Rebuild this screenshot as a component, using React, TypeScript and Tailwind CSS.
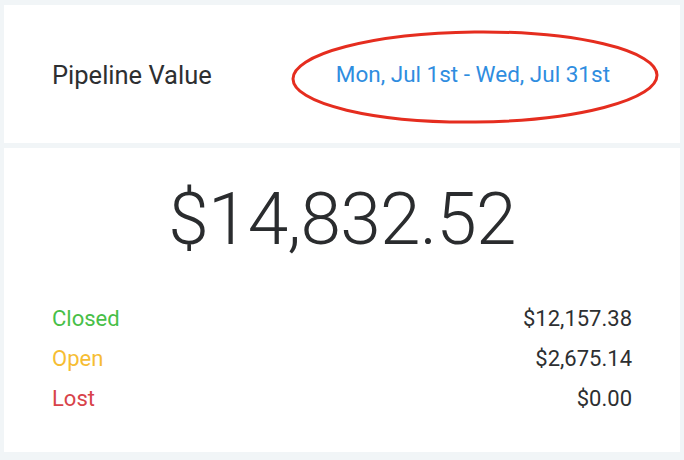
import React from "react";

export default function App() {
  return (
    <div className="w-[684px] h-[460px] bg-[#f1f5f7] px-[4px] pt-[5px] flex flex-col gap-[5px] font-['Roboto',_sans-serif]">
      <div className="relative h-[138px] bg-white flex items-center pl-[48px] pr-[70px]">
        <span className="text-[25.5px] text-[#2d2f31] mt-[2px]">Pipeline Value</span>
        <span className="ml-auto text-[22.5px] text-[#2f8ddf] mt-[1px]">Mon, Jul 1st - Wed, Jul 31st</span>
        <svg className="absolute left-[287px] top-[25px]" width="368" height="94" viewBox="0 0 368 94">
          <ellipse cx="184" cy="47" rx="182" ry="45" fill="none" stroke="#e52d1f" strokeWidth="3" transform="rotate(-0.6 184 47)" />
        </svg>
      </div>
      <div className="h-[304px] bg-white flex flex-col px-[48px]">
        <div className="h-[138px] flex items-center justify-center">
          <span className="text-[73px] font-light text-[#2a2c2e] leading-none tracking-[-0.8px] mt-[4px]">$14,832.52</span>
        </div>
        <div className="flex flex-col text-[22px] leading-[40px] mt-[13px]">
          <div className="flex justify-between">
            <span className="text-[#48bf48]">Closed</span>
            <span className="text-[#2d2f31]">$12,157.38</span>
          </div>
          <div className="flex justify-between">
            <span className="text-[#f6bd33]">Open</span>
            <span className="text-[#2d2f31]">$2,675.14</span>
          </div>
          <div className="flex justify-between">
            <span className="text-[#d8434a]">Lost</span>
            <span className="text-[#2d2f31]">$0.00</span>
          </div>
        </div>
      </div>
    </div>
  );
}
